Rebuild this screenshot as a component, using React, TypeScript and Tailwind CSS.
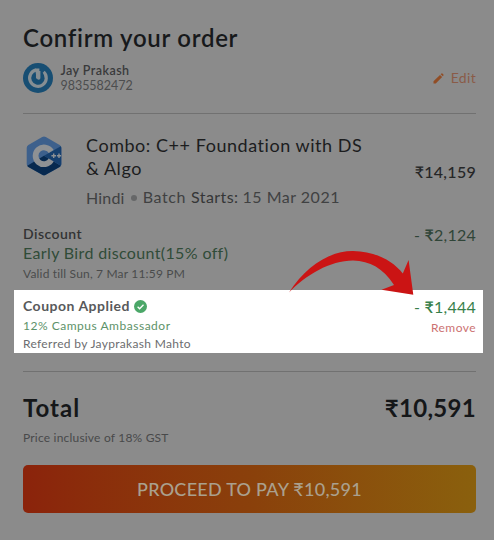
import React from 'react';

function Avatar() {
  return (
    <svg width="30" height="30" viewBox="0 0 30 30" className="shrink-0">
      <circle cx="15" cy="15" r="15" fill="#174e73" />
      <path d="M13.2 6.9 A8.3 8.3 0 1 0 20.6 8.9" fill="none" stroke="#858e93" strokeWidth="3.2" />
      <path d="M12.7 5.6 L16.4 5.4 V15.6 H12.7 Z" fill="#858e93" />
      <path d="M12 10.5 V15 A3.6 3.6 0 0 0 19.2 15 V10" fill="none" stroke="#174e73" strokeWidth="1.8" />
      <path d="M13.9 8 H17.4 V15 A1.75 1.75 0 0 1 13.9 15 Z" fill="#858e93" />
    </svg>
  );
}

function CppLogo() {
  return (
    <svg width="36" height="40" viewBox="0 0 36 40" className="shrink-0">
      <path d="M16.2 1 Q18 0 19.8 1 L33.6 9 Q35.3 10 35.3 12 V28 Q35.3 30 33.6 31 L19.8 38.8 Q18 39.8 16.2 38.8 L2.4 31 Q0.7 30 0.7 28 V12 Q0.7 10 2.4 9 Z" fill="#3d608c" />
      <path d="M18 19.8 L1.3 29.8 Q1.7 30.6 2.4 31 L16.2 38.8 Q18 39.8 19.8 38.8 L33.6 31 Q34.3 30.6 34.8 29.8 Z" fill="#07294f" />
      <path d="M18 19.8 L34.8 10.2 Q35.3 11 35.3 12 V28 Q35.3 29 34.8 29.8 Z" fill="#163f6e" />
      <path d="M25.2 15.5 A8.4 8.4 0 1 0 25.2 24.1" fill="none" stroke="#8e9194" strokeWidth="5.8" />
      <path d="M25.4 19.8 H30 M27.7 17.5 V22.1 M30.9 19.8 H35.1 M33 17.5 V22.1" stroke="#8e9194" strokeWidth="1.4" />
    </svg>
  );
}

function Arrow() {
  return (
    <svg width="126" height="46" viewBox="288 250 126 46" className="absolute left-[288px] top-[250px]">
      <path
        d="M289 292.5 C306 266 330 250.8 353 251 C376 251.5 393 261 402.8 273.5 L408.6 260 L413.3 294.8 L381.5 289.8 L394 285 C383 268 370 261 353 260.5 C330 260.5 306 275 289 292.5 Z"
        fill="#cb1414"
      />
    </svg>
  );
}

export default function App() {
  return (
    <main className="relative h-[540px] w-[494px] overflow-hidden whitespace-nowrap bg-[#8b8b8b] font-['Lato','Liberation_Sans',sans-serif]">
      <div className="px-[23px] pt-[23px]">
        <h1 className="text-[24px] font-semibold leading-[30px] tracking-[0.72px] text-[#17191b]">Confirm your order</h1>
        <section className="mt-[10px] flex h-[30px] w-[453px] items-center">
          <Avatar />
          <div className="ml-[7.5px] grow">
            <p className="text-[12.5px] font-semibold leading-[15px] tracking-[0.45px] text-[#393a3b]">Jay Prakash</p>
            <p className="text-[12.5px] leading-[15px] tracking-[-0.04px] text-[#4c4d4e]">9835582472</p>
          </div>
          <svg width="11" height="11" viewBox="0 0 11 11" className="mr-[7px]" fill="#914d25">
            <path d="M0.5 10.5 V8.2 L7 1.9 L9.1 4 L2.8 10.5 Z M7.7 1.2 L8.5 0.5 Q9 0.2 9.4 0.6 L10.4 1.6 Q10.8 2 10.4 2.5 L9.8 3.3 Z" />
          </svg>
          <span className="text-[14px] leading-[18px] tracking-[0.3px] text-[#8a5b48]">Edit</span>
        </section>
        <hr className="mt-[20px] w-[453px] border-t border-[#717171]" />

        <section className="mt-[20px] flex w-[453px]">
          <div className="ml-[3px] mt-[2px] w-[60px]">
            <CppLogo />
          </div>
          <div className="grow">
            <h2 className="text-[18px] leading-[23px] tracking-[0.54px] text-[#1c1d1e]">
              Combo: C++ Foundation with DS
              <br />
              &amp; Algo
            </h2>
            <p className="mt-[8px] flex h-[20px] items-center text-[16px] leading-[20px] text-[#404142]">
              <span className="tracking-[0.2px]">Hindi</span>
              <span className="ml-[6px] mr-[6px] size-[6px] rounded-full bg-[#666768]" />
              <span className="mb-[2px] tracking-[0.6px]">Batch</span>
              <span className="mb-[2px] ml-[5px] tracking-[0.43px] text-[#353637]">Starts:</span>
              <span className="mb-[2px] ml-[4px] tracking-[0.5px]">15 Mar 2021</span>
            </p>
          </div>
          <p className="mt-[28px] text-[16px] font-medium leading-[20px] tracking-[0.28px] text-[#252627]">₹14,159</p>
        </section>

        <section className="mt-[17px] flex w-[453px] justify-between">
          <div>
            <h3 className="text-[14px] font-semibold leading-[18px] tracking-[0.45px] text-[#323334]">Discount</h3>
            <p className="text-[16px] leading-[20px] tracking-[0.36px] text-[#304c38]">Early Bird discount(15% off)</p>
            <p className="mt-[3px] text-[12px] leading-[16px] tracking-[0.18px] text-[#4a4b4c]">Valid till Sun, 7 Mar 11:59 PM</p>
          </div>
          <p className="text-[16px] leading-[20px] tracking-[0.25px] text-[#304538]">
            - <b className="font-semibold">₹</b>2,124
          </p>
        </section>
      </div>

      <section className="ml-[14px] mt-[8px] flex h-[63px] w-[469px] justify-between bg-white pl-[9px] pr-[7px] pt-[7px]">
        <div>
          <h3 className="flex items-center text-[14px] font-bold leading-[18px] tracking-[0.5px] text-[#58595b]">
            Coupon Applied
            <svg width="13" height="13" viewBox="0 0 13 13" className="ml-[4px]">
              <circle cx="6.5" cy="6.5" r="6.5" fill="#4ba768" />
              <path d="M3.6 6.7 L5.6 8.7 L9.5 4.7" fill="none" stroke="#fff" strokeWidth="1.3" />
            </svg>
          </h3>
          <p className="mt-[2px] text-[12px] leading-[18px] tracking-[0.52px] text-[#5d9269]">12% Campus Ambassador</p>
          <p className="text-[12px] leading-[18px] tracking-[0.32px] text-[#6c6d6f]">Referred by Jayprakash Mahto</p>
        </div>
        <div className="text-right">
          <p className="text-[16px] leading-[20px] tracking-[0.25px] text-[#37804b]">
            - <b className="font-semibold">₹</b>1,444
          </p>
          <p className="mt-[3px] text-[12px] leading-[16px] tracking-[0.45px] text-[#cc7272]">Remove</p>
        </div>
      </section>

      <div className="px-[23px]">
        <hr className="mt-[18px] w-[453px] border-t border-[#717171]" />
        <section className="mt-[21px] flex w-[453px] justify-between text-[24px] font-bold leading-[30px] text-[#151719]">
          <h2 className="tracking-[1px]">Total</h2>
          <p className="tracking-[0.3px]">₹10,591</p>
        </section>
        <p className="mt-[7px] text-[12px] leading-[16px] tracking-[0.2px] text-[#48494a]">Price inclusive of 18% GST</p>
        <button className="mt-[19px] block h-[48px] w-[453px] rounded-[5px] bg-linear-to-r from-[#8b230b] via-[#8a400b] to-[#8a600d] text-[18px] font-medium tracking-[0.27px] text-[#aaa08e]">
          PROCEED TO PAY ₹10,591
        </button>
      </div>

      <Arrow />
    </main>
  );
}
